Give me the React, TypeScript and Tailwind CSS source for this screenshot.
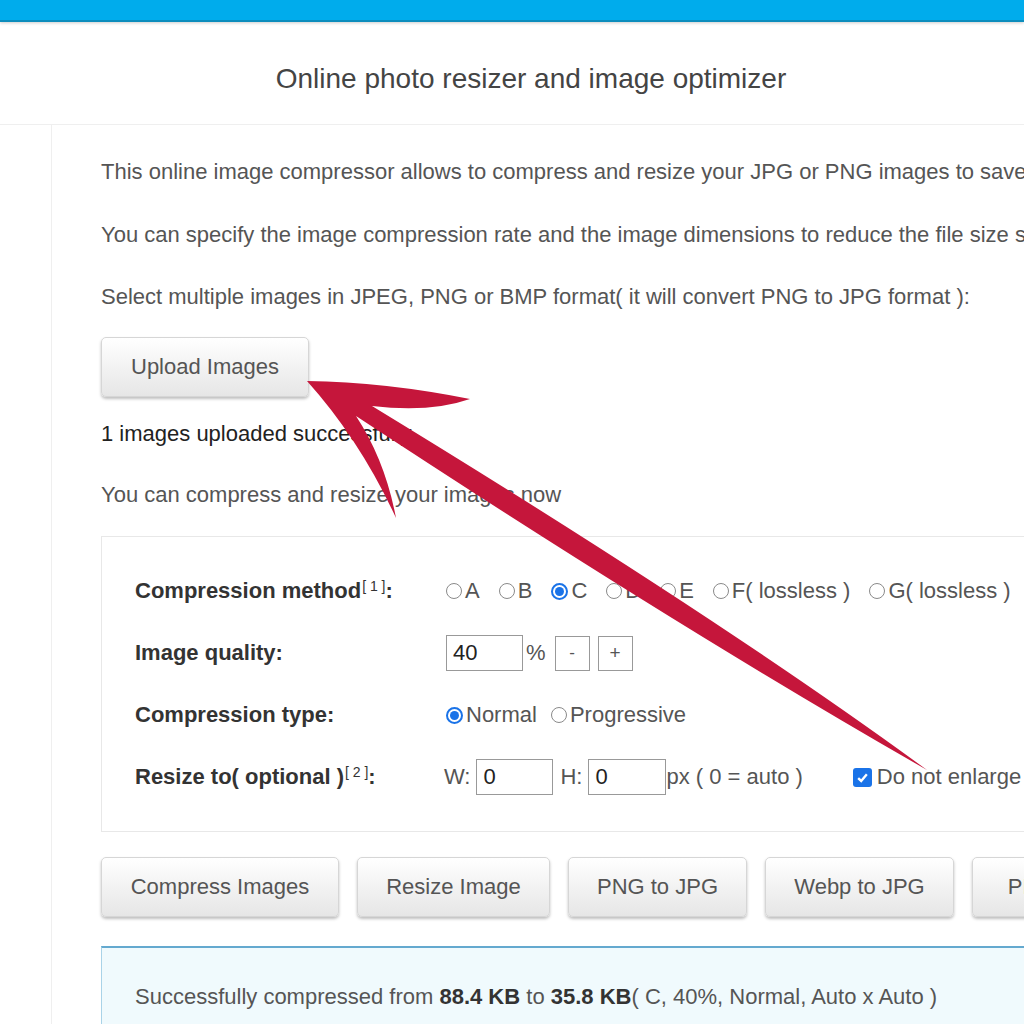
const Radio = ({ checked = false }: { checked?: boolean }) =>
  checked ? (
    <span className="mr-[3px] inline-flex h-[17px] w-[17px] items-center justify-center rounded-full border-2 border-[#1a73e8] bg-white">
      <span className="h-[9px] w-[9px] rounded-full bg-[#1a73e8]" />
    </span>
  ) : (
    <span className="mr-[3px] inline-block h-[16px] w-[16px] rounded-full border border-[#8a8a8a] bg-white" />
  );

const Option = ({ label, checked }: { label: string; checked?: boolean }) => (
  <span className="inline-flex items-center">
    <Radio checked={checked} />
    {label}
  </span>
);

const Field = ({ value, w }: { value: string; w: string }) => (
  <span className={`inline-flex h-[36px] items-center border border-[#999] bg-white px-[6px] text-[#222] ${w}`}>{value}</span>
);

const btn =
  "flex h-[60px] shrink-0 items-center justify-center rounded-[5px] border border-[#d6d6d6] bg-gradient-to-b from-white to-[#e6e6e6] text-[22px] text-[#555] shadow-[0_2px_3px_rgba(0,0,0,0.25)]";

export default function App() {
  return (
    <div className="relative h-[1024px] w-[1024px] overflow-hidden bg-white font-['Liberation_Sans',Arial,sans-serif]">
      <div className="h-[22px] border-b-2 border-[#0c8dbd] bg-[#00acec] shadow-[0_1px_3px_rgba(0,0,0,0.2)]" />
      <div className="flex h-[103px] items-center justify-center border-b border-[#efefef] pl-[38px] pt-[12px] text-[28px] text-[#444]">
        Online photo resizer and image optimizer
      </div>

      <div className="flex">
        <div className="w-[52px] shrink-0 border-r border-[#efefef]" />
        <div className="w-[1200px] shrink-0 pl-[49px] pt-[32px] text-[22px] leading-[30px] text-[#555]">
          <p className="whitespace-nowrap">
            This online image compressor allows to compress and resize your JPG or PNG images to save space and bandwidth.
          </p>
          <p className="mt-[33px] whitespace-nowrap">
            You can specify the image compression rate and the image dimensions to reduce the file size significantly.
          </p>
          <p className="mt-[32px] whitespace-nowrap">
            Select multiple images in JPEG, PNG or BMP format( it will convert PNG to JPG format ):
          </p>
          <button className={`${btn} mt-[25px] h-[57px] w-[208px]`}>Upload Images</button>
          <p className="mt-[22px] text-[#222]">1 images uploaded successfully</p>
          <p className="mt-[31px]">You can compress and resize your images now</p>

          <div className="mt-[26px] flex h-[296px] flex-col justify-center gap-[26px] border border-[#e8e8e8] pl-[33px] text-[#555]">
            <div className="flex h-[36px] items-center">
              <span className="w-[311px] shrink-0 font-bold text-[#333]">
                Compression method<sup className="ml-[1px] text-[14px] font-normal">[ 1 ]</sup>:
              </span>
              <span className="flex items-center gap-[19px]">
                <Option label="A" />
                <Option label="B" />
                <Option label="C" checked />
                <Option label="D" />
                <Option label="E" />
                <Option label="F( lossless )" />
                <Option label="G( lossless )" />
              </span>
            </div>
            <div className="flex h-[36px] items-center">
              <span className="w-[311px] shrink-0 font-bold text-[#333]">Image quality:</span>
              <Field value="40" w="w-[77px]" />
              <span className="ml-[3px]">%</span>
              <span className="ml-[9px] flex h-[35px] w-[35px] items-center justify-center border border-[#999] text-[17px]">-</span>
              <span className="ml-[8px] flex h-[35px] w-[35px] items-center justify-center border border-[#999] text-[19px]">+</span>
            </div>
            <div className="flex h-[36px] items-center">
              <span className="w-[311px] shrink-0 font-bold text-[#333]">Compression type:</span>
              <span className="flex items-center gap-[14px]">
                <Option label="Normal" checked />
                <Option label="Progressive" />
              </span>
            </div>
            <div className="flex h-[36px] items-center">
              <span className="w-[309px] shrink-0 font-bold text-[#333]">
                Resize to( optional )<sup className="ml-[1px] text-[14px] font-normal">[ 2 ]</sup>:
              </span>
              <span>W:</span>
              <span className="ml-[6px]"><Field value="0" w="w-[77px]" /></span>
              <span className="ml-[7px]">H:</span>
              <span className="ml-[6px]"><Field value="0" w="w-[78px]" /></span>
              <span>px ( 0 = auto )</span>
              <span className="ml-[50px] inline-flex items-center">
                <span className="mr-[5px] flex h-[19px] w-[19px] items-center justify-center rounded-[3px] bg-[#1a73e8]">
                  <svg width="13" height="13" viewBox="0 0 12 12">
                    <path d="M2 6.5 L4.8 9.2 L10 3" fill="none" stroke="white" strokeWidth="2.2" />
                  </svg>
                </span>
                Do not enlarge
              </span>
            </div>
          </div>

          <div className="mt-[25px] flex gap-[18px]">
            <button className={`${btn} w-[238px]`}>Compress Images</button>
            <button className={`${btn} w-[193px]`}>Resize Image</button>
            <button className={`${btn} w-[179px]`}>PNG to JPG</button>
            <button className={`${btn} w-[189px]`}>Webp to JPG</button>
            <button className={`${btn} w-[189px]`}>PDF to JPG</button>
          </div>

          <div className="mt-[29px] h-[120px] border-l border-t-2 border-[#64a9cf] border-l-[#a9d3e8] bg-[#f0fafd] pl-[33px] pt-[34px] text-[#555]">
            Successfully compressed from <b className="text-[#333]">88.4 KB</b> to <b className="text-[#333]">35.8 KB</b>( C, 40%, Normal, Auto x Auto )
          </div>
        </div>
      </div>

      <svg className="pointer-events-none absolute left-0 top-0" width="1024" height="1024" viewBox="0 0 1024 1024">
        <path
          d="M307 381 Q385 382 470 399 Q430 413 372 406 Q718 617 927 770 Q675 626 356 416 Q385 460 396 518 Q360 440 307 381 Z"
          fill="#c5163b"
        />
      </svg>
    </div>
  );
}
